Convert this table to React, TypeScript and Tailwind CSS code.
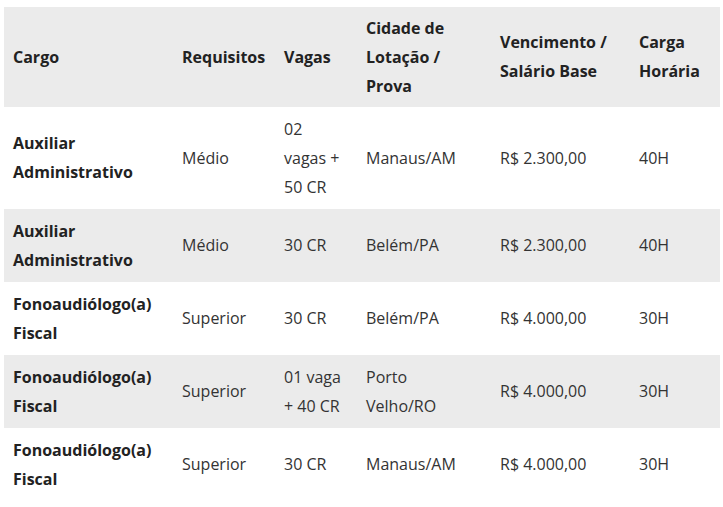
const rows = [
  { cargo: ["Auxiliar", "Administrativo"], req: "Médio", vagas: ["02", "vagas +", "50 CR"], cidade: ["Manaus/AM"], salario: "R$ 2.300,00", carga: "40H" },
  { cargo: ["Auxiliar", "Administrativo"], req: "Médio", vagas: ["30 CR"], cidade: ["Belém/PA"], salario: "R$ 2.300,00", carga: "40H" },
  { cargo: ["Fonoaudiólogo(a)", "Fiscal"], req: "Superior", vagas: ["30 CR"], cidade: ["Belém/PA"], salario: "R$ 4.000,00", carga: "30H" },
  { cargo: ["Fonoaudiólogo(a)", "Fiscal"], req: "Superior", vagas: ["01 vaga", "+ 40 CR"], cidade: ["Porto", "Velho/RO"], salario: "R$ 4.000,00", carga: "30H" },
  { cargo: ["Fonoaudiólogo(a)", "Fiscal"], req: "Superior", vagas: ["30 CR"], cidade: ["Manaus/AM"], salario: "R$ 4.000,00", carga: "30H" },
];

function Lines({ parts }: { parts: string[] }) {
  return (
    <>
      {parts.map((p, i) => (
        <div key={i} className="whitespace-nowrap">{p}</div>
      ))}
    </>
  );
}

export default function App() {
  return (
    <div className="min-h-[507px] bg-white pl-[4px] pt-[7px] text-[16px] leading-[29px] text-[#333]" style={{ fontFamily: '"Open Sans", "Noto Sans", sans-serif' }}>
      <table className="w-[716px] table-fixed border-collapse">
        <colgroup>
          <col className="w-[169px]" />
          <col className="w-[102px]" />
          <col className="w-[82px]" />
          <col className="w-[134px]" />
          <col className="w-[139px]" />
          <col className="w-[90px]" />
        </colgroup>
        <thead>
          <tr className="h-[100px] bg-[#ebebeb] text-left align-middle font-bold text-[#222]">
            <th className="px-[9px]">Cargo</th>
            <th className="px-[9px]">Requisitos</th>
            <th className="px-[9px]">Vagas</th>
            <th className="px-[9px]"><Lines parts={["Cidade de", "Lotação /", "Prova"]} /></th>
            <th className="px-[9px]"><Lines parts={["Vencimento /", "Salário Base"]} /></th>
            <th className="px-[9px]"><Lines parts={["Carga", "Horária"]} /></th>
          </tr>
        </thead>
        <tbody>
          {rows.map((r, i) => (
            <tr key={i} className={`align-middle ${i % 2 === 1 ? "bg-[#ebebeb]" : "bg-white"}`}>
              <td className="px-[9px] py-[7.5px] font-bold text-[#222]"><Lines parts={r.cargo} /></td>
              <td className="px-[9px] py-[7.5px]">{r.req}</td>
              <td className="px-[9px] py-[7.5px]"><Lines parts={r.vagas} /></td>
              <td className="px-[9px] py-[7.5px]"><Lines parts={r.cidade} /></td>
              <td className="px-[9px] py-[7.5px] whitespace-nowrap">{r.salario}</td>
              <td className="px-[9px] py-[7.5px]">{r.carga}</td>
            </tr>
          ))}
        </tbody>
      </table>
    </div>
  );
}
